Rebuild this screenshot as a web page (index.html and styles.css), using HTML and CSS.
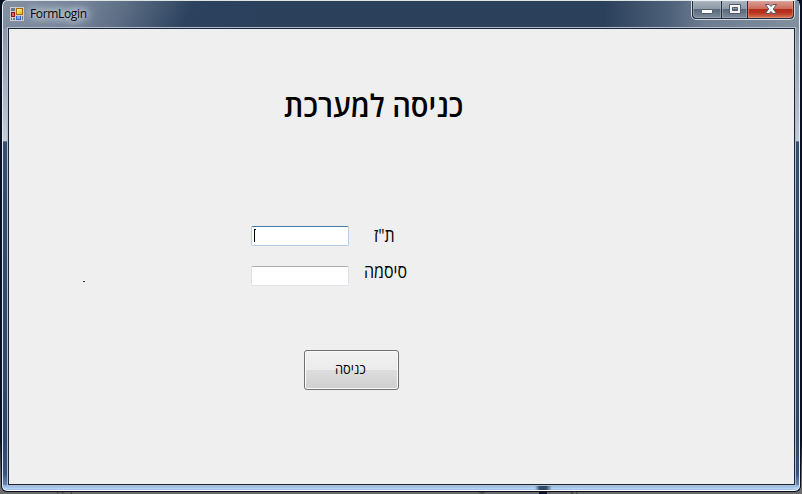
FILE: index.html
```
<!DOCTYPE html>
<html lang="he">
<head>
<meta charset="utf-8">
<title>FormLogin</title>
<link rel="stylesheet" href="styles.css">
</head>
<body>
<div class="desktop">
  <div class="behind"><span class="behind-a">Value</span><span class="behind-b">Type</span><i class="behind-mark"></i><span class="behind-c">Name</span></div>
  <div class="window">
    <header class="titlebar">
      <svg class="app-icon" width="14" height="14" viewBox="0 0 14 14" shape-rendering="crispEdges">
        <defs><linearGradient id="gold" x2="1" y2="1"><stop stop-color="#fff6ae"/><stop offset="1" stop-color="#f5b100"/></linearGradient></defs>
        <path fill="#cbcdd0" d="M0 0h14v14H0z"/>
        <path fill="#6d7783" d="M1 1h4v3H1zM1 11h1v2H1zM3 11h2v2H3z"/>
        <path fill="#a56a00" d="M6 1h7v7H6z"/><path fill="url(#gold)" d="M7 2h5v5H7z"/>
        <path fill="#8b1710" d="M1 5h4v5H1z"/><path fill="#e0685a" d="M2 6h2v3H2z"/>
        <path fill="#3566bd" d="M6 9h5v4H6z"/><path fill="#79aaf5" d="M7 9h3v3H7z"/>
        <path fill="#69788f" d="M12 9h1v4h-1z"/>
      </svg>
      <span class="caption">FormLogin</span>
      <div class="controls">
        <button class="ctl min" aria-label="Minimize"><svg width="14" height="12" viewBox="0 0 14 12"><rect x="1.5" y="6.5" width="11" height="4" rx=".7" fill="#fff" stroke="#515a6c"/></svg></button>
        <button class="ctl max" aria-label="Maximize"><svg width="14" height="12" viewBox="0 0 14 12"><path fill="#f4f4f4" stroke="#515a6c" fill-rule="evenodd" d="M1.500 1.500h11v9h-11zM4.500 4.500h5v3h-5z"/></svg></button>
        <button class="ctl close" aria-label="Close"><svg width="14" height="12" viewBox="0 0 14 12"><path fill="#fff" stroke="#515a6c" d="M1.500 1.500h3.700L7 3.600l1.800-2.100h3.700L9.300 6l3.200 4.500H8.800L7 8.400l-1.800 2.100H1.500L4.700 6z"/></svg></button>
      </div>
    </header>
    <main class="client">
      <h1 class="heading"><span dir="rtl">כניסה למערכת</span></h1>
      <form class="login">
        <div class="row"><div class="box focused"><i class="caret"></i></div><label class="label id-label"><span dir="rtl">ת"ז</span></label></div>
        <div class="row second"><span class="dot"></span><div class="box"></div><label class="label pass-label"><span dir="rtl">סיסמה</span></label></div>
        <button type="button" class="submit"><span dir="rtl">כניסה</span></button>
      </form>
    </main>
  </div>
</div>
</body>
</html>
```
FILE: styles.css
```
* { box-sizing: border-box; }
body { margin: 0; overflow: hidden; font-family: "Open Sans", "Noto Sans", sans-serif; }
.desktop {
  position: relative;
  width: 802px; height: 494px;
  background: linear-gradient(#071024 0, #071024 440px, #77777a 484px, #69696b 100%);
  overflow: hidden;
}
.behind {
  position: absolute; left: 0; top: 484px; width: 802px; height: 10px;
  overflow: hidden; font-size: 11px; line-height: 15px; color: #443e44;
}
.behind span { position: absolute; top: 4px; }
.behind-a { left: 57px; }
.behind-b { left: 479px; }
.behind-c { left: 570px; }
.behind-mark { position: absolute; left: 539px; top: 0; width: 8px; height: 10px; background: #11152b; }
.window {
  position: relative;
  width: 800px; height: 492px; margin-left: 1px;
  padding: 0 6px;
  border: 1px solid #0b0f1c; border-top: 0;
  border-radius: 6px;
  background:
    linear-gradient(90deg, transparent 533px, #304766 538px, #304766 544px, transparent 550px) 0 485px / 100% 6px no-repeat,
    linear-gradient(#87aeda, #b5d3f4 60%, #8eb3dc) 0 485px / 100% 6px no-repeat,
    linear-gradient(transparent 474px, #8db1dc88 485px),
    linear-gradient(transparent 28px, #8b97a8 28px, #c3ccd5 141px, #6b7c91 141px, #6b7c91 142px, #354f71 142px, #2e4668 440px, #3e5d86 100%) 0 0 / 7px 100% no-repeat,
    linear-gradient(transparent 28px, #8b97a8 28px, #c3ccd5 141px, #6b7c91 141px, #6b7c91 142px, #354f71 142px, #2e4668 440px, #3e5d86 100%) 100% 0 / 7px 100% no-repeat,
    linear-gradient(115deg, #8290a0 0, #75849a 70px, #5c6d84 115px, #2c425e 175px, #2b405b 240px, #2b405b 885px, #2b405b 100%);
  box-shadow: inset 1px 0 #e4eef6, inset -1px 0 #e4eef6, inset 0 1px #dce4e6, inset 0 -1px #fff;
}
.titlebar {
  display: flex; height: 28px; margin: 0 -5px; padding: 0 5px;
  background: linear-gradient(90deg, transparent 600px, #4d6079 665px, #6b7b90 700px, #82909e 100%) 0 1px no-repeat;
}
.app-icon { margin: 7px 0 0 2px; flex: none; }
.caption {
  align-self: flex-start;
  margin: 5px 0 0 6px;
  font-size: 12px; line-height: 18px; letter-spacing: -.35px; color: #050505;
  text-shadow: 0 0 6px #d4dce5, 0 0 8px #d4dce5, 0 0 12px #bdc8d4, 4px 0 12px #bdc8d4;
}
.controls {
  display: flex;
  width: 104px; height: 20px; margin: 0 -1px 0 auto;
  border: 1px solid #d2d9df; border-top-color: #edf2f5;
  border-radius: 0 0 5px 5px;
  background: #222c3e;
  padding: 0 1px 1px;
  gap: 1px;
}
.ctl {
  border: 0; padding: 0 0 1px;
  display: flex; align-items: center; justify-content: center;
  background: linear-gradient(#a8b2bb 0, #8c99a5 48%, #57697c 50%, #7d8c9b 100%);
  box-shadow: inset 0 0 0 1px #b3bec977;
}
.ctl svg { flex: none; }
.min { width: 28px; border-radius: 0 0 0 4px; }
.max { width: 25px; }
.close {
  width: 45px; border-radius: 0 0 4px 0;
  background: linear-gradient(#d8a094 0, #cb6c5c 46%, #b12d19 50%, #bc3420 70%, #d67958 100%);
  box-shadow: inset 0 0 0 1px #e6a89877;
}
.client {
  width: 787px; height: 457px;
  background: #efefef;
  border: 1px solid #1b2539;
  outline: 1px solid #b0bdcc;
  padding-top: 60px;
}
.heading {
  width: 180px; height: 32px; margin: 0 0 0 275px;
  display: flex; justify-content: center; align-items: center;
  font-size: 31px; line-height: 32px; font-weight: 600; white-space: nowrap; color: #000;
}
.heading span { display: block; flex: none; transform: scaleX(.937); }
.login { display: flex; flex-direction: column; margin-top: 105px; }
.row { display: flex; padding-left: 242px; height: 20px; }
.second { margin-top: 20px; padding-left: 74px; }
.dot { width: 2px; height: 1px; margin: 15px 166px 0 0; background: #333; }
.box {
  width: 98px; height: 20px; flex: none;
  border: 1px solid #e2e3ea; border-top-color: #abadb3;
  border-radius: 2px; background: #fff;
}
.focused { border-color: #b5cfe7; border-top-color: #3d7bad; padding: 2px 0 0 2px; }
.caret { display: block; width: 2px; height: 13px; border-left: 1px solid #000; border-top: 1px solid #000; }
.label {
  display: flex; justify-content: center; flex: none;
  font-size: 19px; line-height: 20px; height: 20px; color: #000; white-space: nowrap;
}
.label span { flex: none; transform: scaleX(.84); }
.id-label { width: 22px; margin: -1px 0 0 24px; }
.pass-label { width: 42px; margin: -5px 0 0 16px; }
.submit {
  width: 95px; height: 40px; margin: 64px 0 0 295px; padding: 0 2px 2px 0;
  border: 1px solid #707070; border-radius: 3px;
  background: linear-gradient(#f2f2f2, #ebebeb 49%, #dddddd 50%, #cfcfcf);
  box-shadow: inset 0 0 0 1px #fbfbfb;
  font: 14.5px/20px "Open Sans", sans-serif; color: #000;
}
.submit span { display: inline-block; transform: scaleX(.89); }
```
